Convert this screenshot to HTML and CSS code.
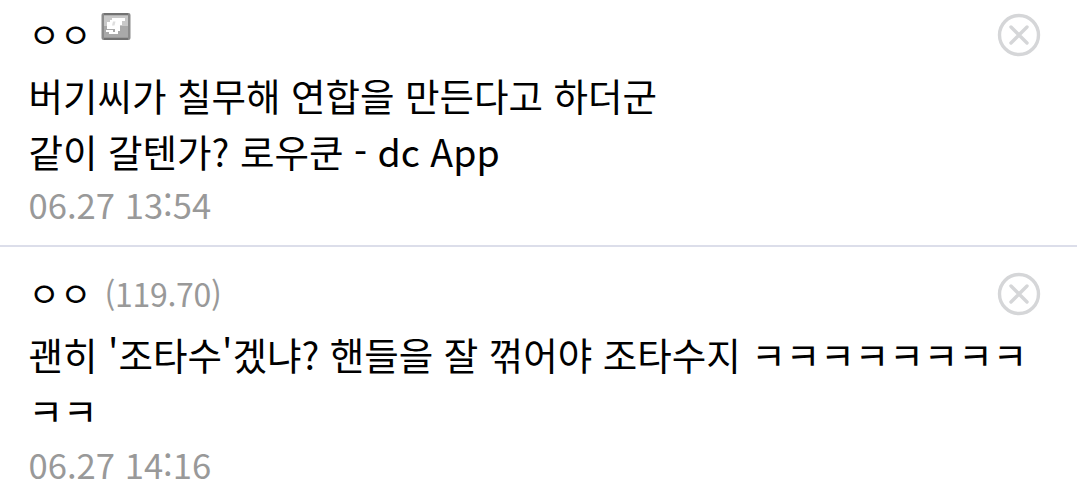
FILE: index.html
```html
<!DOCTYPE html>
<html lang="ko">
<head>
    <meta charset="utf-8">
    <title>댓글</title>
    <link rel="stylesheet" href="styles.css">
</head>
<body>
<ul class="cmt-list">
    <li class="cmt">
        <div class="cmt-top">
            <span class="nick">ㅇㅇ</span>
            <svg class="gonick" width="30" height="27" viewBox="0 0 30 27">
                <rect x="0.5" width="29" height="27" rx="2" fill="#8b8b8b"/>
                <path d="M3 0h24v2H3zM3 25h24v2H3z" fill="#727272"/>
                <path d="M3 2.5h24v22H3z" fill="#a9a9a9"/>
                <path d="M3 2.5h24v10.5H3z" fill="#c8c8c8"/>
                <path d="M11 5h13v3h-3v4h-2v6h-2v3H8v-2h6v-3H6V9h3V7h2zM5 17h7v2H5z" fill="#fff"/>
                <path d="M12 8.5h2.5l-1 4H11z" fill="#dedede"/>
            </svg>
            <svg class="del" width="44" height="44" viewBox="0 0 44 44">
                <circle cx="22" cy="22" r="19.5"/>
                <path d="M14 14l16 16M30 14l-16 16"/>
            </svg>
        </div>
        <p class="txt">버기씨가 칠무해 연합을 만든다고 하더군<br>같이 갈텐가? 로우쿤 - dc App</p>
        <span class="date">06.27 13:54</span>
    </li>
    <li class="cmt">
        <div class="cmt-top">
            <span class="nick">ㅇㅇ</span>
            <span class="ip">(119.70)</span>
            <svg class="del" width="44" height="44" viewBox="0 0 44 44">
                <circle cx="22" cy="22" r="19.5"/>
                <path d="M14 14l16 16M30 14l-16 16"/>
            </svg>
        </div>
        <p class="txt">괜히 '조타수'겠냐? 핸들을 잘 꺾어야 조타수지 ㅋㅋㅋㅋㅋㅋㅋㅋ<br>ㅋㅋ</p>
        <span class="date">06.27 14:16</span>
    </li>
</ul>
</body>
</html>
```
FILE: styles.css
```css
body {
    margin: 0;
    background: #fff;
    color: #000;
    font-family: "Noto Sans CJK KR", sans-serif;
}
.cmt-list {
    margin: 0;
    padding: 0;
    list-style: none;
}
.cmt {
    height: 247px;
    padding: 13px 36px 0 28.6px;
    box-sizing: border-box;
    border-bottom: 2px solid #dcdeea;
}
.cmt + .cmt {
    height: 257px;
    padding-top: 25px;
    border-bottom: 0;
}
.cmt + .cmt .date {
    padding-top: 1px;
}
.cmt-top {
    display: flex;
    align-items: center;
    height: 44px;
}
.nick {
    margin-top: -5px;
    font-size: 34.2px;
    line-height: 44px;
}
.gonick {
    margin: -17px 0 0 9px;
}
.ip {
    margin: -2px 0 0 13px;
    color: #999;
    font-size: 32px;
    letter-spacing: -.3px;
}
.del {
    margin-left: auto;
    fill: none;
    stroke: #d5d6d8;
    stroke-width: 3.4;
    stroke-linecap: round;
}
.txt {
    margin: 10px 0 0;
    font-size: 37.5px;
    line-height: 56px;
    white-space: nowrap;
}
.date {
    display: block;
    color: #999;
    font-size: 34.6px;
    line-height: 50px;
}
```
